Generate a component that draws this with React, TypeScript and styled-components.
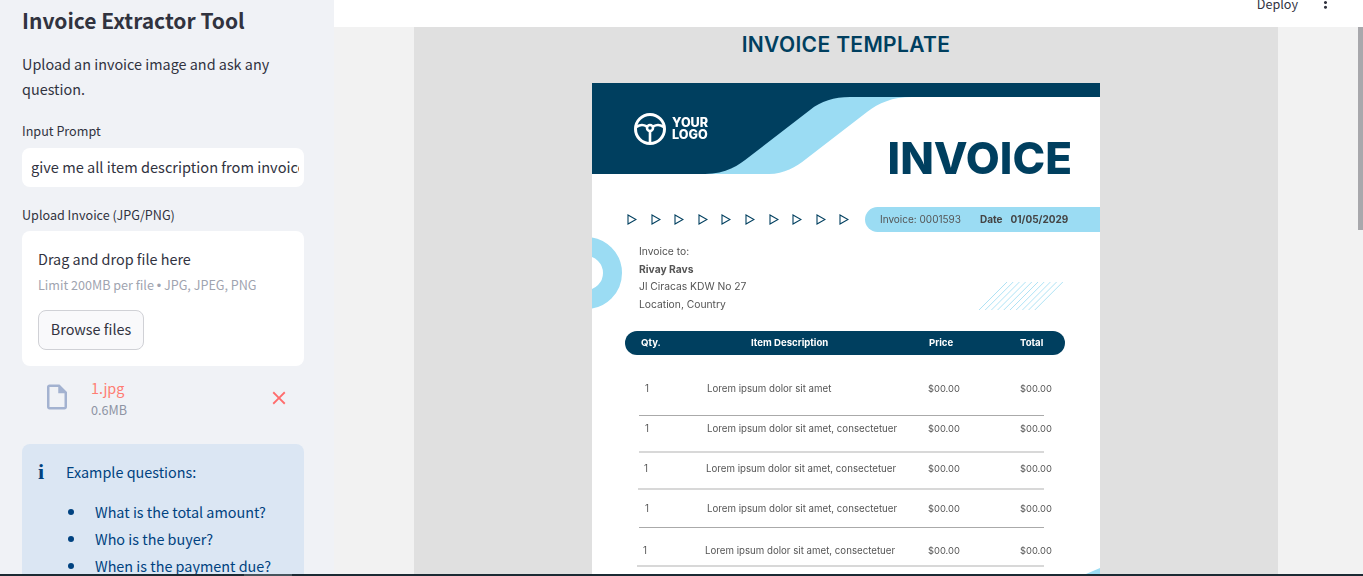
import React from "react"
import styled, { createGlobalStyle } from "styled-components"
import { MdClose, MdMoreVert, MdOutlineInsertDriveFile } from "react-icons/md"

const GlobalStyle = createGlobalStyle`
  html, body {
    margin: 0;
    height: 100%;
    overflow: hidden;
  }
  #root {
    height: 100%;
  }
  * {
    box-sizing: border-box;
  }
`

const NAVY = "#003f5f"
const SKY = "#9bdcf3"

const Shell = styled.div`
  height: 100%;
  display: flex;
  flex-direction: column;
  font-family: "Noto Sans CJK SC", "Noto Sans", sans-serif;
  color: #31333f;
`

const Workspace = styled.div`
  flex: 1;
  min-height: 0;
  display: flex;
`

const Taskbar = styled.div`
  height: 2px;
  flex: none;
  background-color: #1b2a33;
  padding-left: 244px;
  & span {
    display: block;
    width: 48px;
    height: 2px;
    background-color: #46545c;
  }
`

const Sidebar = styled.aside`
  width: 334px;
  flex: none;
  overflow: hidden;
  padding: 5px 30px 0 22px;
  background-color: #f0f2f6;
`

const AppTitle = styled.h1`
  margin: 0;
  font-size: 21px;
  line-height: 30px;
  font-weight: 600;
`

const Intro = styled.p`
  margin: 16px 0 0;
  font-size: 14.4px;
  line-height: 25px;
`

const FieldLabel = styled.div<{ $top: number }>`
  margin-top: ${p => p.$top}px;
  font-size: 12.6px;
  line-height: 20px;
`

const PromptInput = styled.input`
  display: block;
  width: 100%;
  height: 39px;
  margin-top: 7px;
  padding: 0 5px 2px 9px;
  border: 0;
  border-radius: 8px;
  outline: 0;
  background-color: #fff;
  color: #31333f;
  font-family: inherit;
  font-size: 14.6px;
`

const DropCard = styled.div`
  margin-top: 6px;
  padding: 16px 16px 16px;
  border-radius: 8px;
  background-color: #fff;
`

const DropTitle = styled.div`
  font-size: 14.4px;
  line-height: 24px;
`

const DropHint = styled.div`
  height: 20px;
  margin-top: 4px;
  font-size: 12.6px;
  line-height: 20px;
  white-space: nowrap;
  color: #a0a4b0;
`

const HintDot = styled.span`
  font-family: "Liberation Sans", sans-serif;
`

const BrowseButton = styled.button`
  display: block;
  width: 106px;
  height: 40px;
  margin-top: 15px;
  padding: 0 0 3px;
  border: 1px solid #d0d1d6;
  border-radius: 8px;
  background-color: #f9f9fb;
  color: #31333f;
  font-family: inherit;
  font-size: 14.4px;
`

const FileRow = styled.div`
  display: flex;
  margin-top: 10px;
  padding: 0 14px 0 20px;
`

const FileIcon = styled(MdOutlineInsertDriveFile)`
  flex: none;
  margin-top: 6px;
  color: #a3b2d0;
`

const FileInfo = styled.div`
  margin-left: 19px;
`

const FileName = styled.div`
  font-size: 14.4px;
  line-height: 24px;
  color: #ff7d73;
`

const FileSize = styled.div`
  font-size: 12.6px;
  line-height: 20px;
  color: #8e94a4;
`

const RemoveIcon = styled(MdClose)`
  flex: none;
  margin: 11px 0 0 auto;
  color: #ff6c6c;
`

const InfoBox = styled.div`
  margin-top: 24px;
  padding: 16px 16px 24px;
  border-radius: 8px;
  background-color: #dbe6f3;
  color: #004280;
`

const InfoHead = styled.div`
  display: flex;
  font-size: 14.4px;
  line-height: 24px;
`

const InfoGlyph = styled.span`
  width: 28px;
  flex: none;
  font-family: "Liberation Serif", serif;
  font-size: 22px;
  font-weight: 700;
`

const QuestionList = styled.ul`
  margin: 16px 0 0;
  padding: 0 0 0 30px;
  list-style: none;
  display: flex;
  flex-direction: column;
  gap: 3px;
`

const Question = styled.li`
  display: flex;
  align-items: center;
  font-size: 14.4px;
  line-height: 24px;
  white-space: nowrap;
  &::before {
    content: "";
    width: 6px;
    height: 6px;
    margin-right: 21px;
    border-radius: 50%;
    background-color: #004280;
  }
`

const Main = styled.main`
  flex: 1;
  min-width: 0;
  display: flex;
  flex-direction: column;
`

const TopBar = styled.header`
  height: 27px;
  flex: none;
  overflow: hidden;
  display: flex;
  justify-content: flex-end;
  align-items: flex-start;
  gap: 18px;
  padding-right: 28px;
  background-color: #fff;
`

const DeployLabel = styled.span`
  margin-top: -6px;
  font-size: 12.6px;
  line-height: 20px;
`

const MoreIcon = styled(MdMoreVert)`
  margin-top: -7px;
`

const ContentArea = styled.div`
  flex: 1;
  min-height: 0;
  display: flex;
  background-color: #f2f2f2;
`

const ImageColumn = styled.div`
  flex: 1;
  min-width: 0;
  display: flex;
  justify-content: center;
`

const ScrollTrack = styled.div`
  width: 5px;
  flex: none;
  & span {
    display: block;
    height: 203px;
    background-color: #a8a8ac;
  }
`

const TemplatePanel = styled.div`
  width: 864px;
  overflow: hidden;
  padding-top: 4px;
  background-color: #e0e0e0;
`

const TemplateTitle = styled.div`
  margin-bottom: 24px;
  text-align: center;
  font-family: Inter, "Liberation Sans", sans-serif;
  font-size: 21px;
  line-height: 28px;
  font-weight: 600;
  letter-spacing: 0.35px;
  color: ${NAVY};
`

const Sheet = styled.div`
  position: relative;
  width: 508px;
  height: 600px;
  margin: 0 auto;
  overflow: hidden;
  background-color: #fff;
  font-family: Inter, "Liberation Sans", sans-serif;
  color: #555;
  filter: blur(0.25px);
`

const Banner = styled.div`
  position: relative;
  height: 91px;
  display: flex;
  justify-content: space-between;
  align-items: flex-start;
  padding: 0 28px 0 42px;
`

const BannerArt = styled.svg`
  position: absolute;
  top: 0;
  left: 0;
`

const LogoBlock = styled.div`
  position: relative;
  display: flex;
  align-items: center;
  gap: 6px;
  margin-top: 30px;
  color: #fff;
`

const LogoText = styled.div`
  font-size: 12.6px;
  line-height: 12px;
  font-weight: 800;
`

const InvoiceHeading = styled.div`
  position: relative;
  margin-top: 55px;
  font-size: 44px;
  line-height: 40px;
  font-weight: 800;
  color: ${NAVY};
`

const RibbonRow = styled.div`
  display: flex;
  justify-content: space-between;
  align-items: center;
  height: 25px;
  margin-top: 33px;
  padding-left: 35px;
`

const Arrows = styled.div`
  display: flex;
  gap: 13.6px;
`

const MetaPill = styled.div`
  width: 235px;
  height: 25px;
  display: flex;
  align-items: center;
  padding: 0 0 2px 15px;
  border-radius: 12.5px 0 0 12.5px;
  background-color: ${SKY};
  font-size: 10px;
  white-space: nowrap;
`

const MetaStrong = styled.b<{ $left: number }>`
  margin-left: ${p => p.$left}px;
  font-weight: 700;
  color: #444;
`

const AddressRow = styled.div`
  display: flex;
  justify-content: space-between;
  padding: 11px 37px 0 47px;
`

const AddressBlock = styled.div`
  font-size: 10.3px;
  line-height: 17.6px;
`

const AddressName = styled.div`
  font-weight: 700;
`

const Stripes = styled.svg`
  align-self: flex-end;
  margin-bottom: 3px;
  opacity: 0.8;
`

const Donut = styled.div`
  position: absolute;
  top: 154px;
  left: -42px;
  width: 72px;
  height: 72px;
  border: 19px solid ${SKY};
  border-radius: 50%;
`

const TableHead = styled.div`
  display: grid;
  grid-template-columns: 110px 178px 91px 1fr;
  align-items: center;
  height: 24px;
  margin: 17.4px 35px 0 33px;
  padding: 0 0 0 16px;
  border-radius: 12px;
  background-color: ${NAVY};
  color: #fff;
  font-size: 9.6px;
  font-weight: 700;
`

const ItemRow = styled.div<{ $top: number; $bottom: number; $soft: boolean; $shift: number }>`
  display: grid;
  grid-template-columns: 62px ${p => 221 - p.$shift}px 92px 1fr;
  width: ${p => 405 - p.$shift}px;
  margin-left: ${p => 47 + p.$shift}px;
  padding: ${p => p.$top}px 0 ${p => p.$bottom}px 6px;
  border-bottom: ${p => (p.$soft ? "2px solid #d8d8d8" : "1px solid #aaa")};
  font-size: 9.7px;
  line-height: 12px;
  white-space: nowrap;
`

const Amount = styled.span`
  font-size: 9.4px;
`

const CornerMark = styled.svg`
  position: absolute;
  top: 485px;
  right: 0;
`

const ARROWS = Array.from({ length: 10 }, (_, i) => i)
const STRIPES = Array.from({ length: 10 }, (_, i) => i)

const ITEMS = [
  { top: 28, bottom: 20, soft: false, shift: 0, text: "Lorem ipsum dolor sit amet" },
  { top: 7, bottom: 16, soft: true, shift: 0, text: "Lorem ipsum dolor sit amet, consectetuer" },
  { top: 10, bottom: 13, soft: true, shift: -1, text: "Lorem ipsum dolor sit amet, consectetuer" },
  { top: 13, bottom: 12, soft: false, shift: 0, text: "Lorem ipsum dolor sit amet, consectetuer" },
  { top: 17, bottom: 8, soft: true, shift: -2, text: "Lorem ipsum dolor sit amet, consectetuer" },
]

const QUESTIONS = ["What is the total amount?", "Who is the buyer?", "When is the payment due?"]

const App: React.FC = () => {
  return (
    <Shell>
      <GlobalStyle />
      <Workspace>
        <Sidebar>
          <AppTitle>Invoice Extractor Tool</AppTitle>
          <Intro>Upload an invoice image and ask any question.</Intro>
          <FieldLabel $top={20}>Input Prompt</FieldLabel>
          <PromptInput readOnly value="give me all item description from invoice" />
          <FieldLabel $top={18}>Upload Invoice (JPG/PNG)</FieldLabel>
          <DropCard>
            <DropTitle>Drag and drop file here</DropTitle>
            <DropHint>
              Limit 200MB per file <HintDot>•</HintDot> JPG, JPEG, PNG
            </DropHint>
            <BrowseButton>Browse files</BrowseButton>
          </DropCard>
          <FileRow>
            <FileIcon size={30} />
            <FileInfo>
              <FileName>1.jpg</FileName>
              <FileSize>0.6MB</FileSize>
            </FileInfo>
            <RemoveIcon size={22} />
          </FileRow>
          <InfoBox>
            <InfoHead>
              <InfoGlyph>i</InfoGlyph>
              Example questions:
            </InfoHead>
            <QuestionList>
              {QUESTIONS.map(q => (
                <Question key={q}>{q}</Question>
              ))}
            </QuestionList>
          </InfoBox>
        </Sidebar>
        <Main>
          <TopBar>
            <DeployLabel>Deploy</DeployLabel>
            <MoreIcon size={19} />
          </TopBar>
          <ContentArea>
            <ImageColumn>
              <TemplatePanel>
                <TemplateTitle>INVOICE TEMPLATE</TemplateTitle>
                <Sheet>
                  <Banner>
                    <BannerArt width="508" height="91" viewBox="0 0 508 91">
                      <path
                        d="M100 91 H177 C192 91 204 84 214 76 L275 29 C287 20 300 14 320 14 H200 L100 60 Z"
                        fill={SKY}
                      />
                      <path
                        d="M0 0 H508 V14 H258 C242 14 229 18 218 27 L157 74 C147 82 134 91 113 91 H0 Z"
                        fill={NAVY}
                      />
                    </BannerArt>
                    <LogoBlock>
                      <svg width="32" height="32" viewBox="0 0 32 32" fill="none" stroke="#fff" strokeWidth="3">
                        <circle cx="16" cy="16" r="14.5" />
                        <circle cx="16" cy="15" r="3" strokeWidth="2.5" />
                        <path d="M2 14 C7 11.5 9 11.5 13 13.5 M19 13.5 C23 11.5 25 11.5 30 14 M16 18 V30" strokeWidth="2.6" />
                      </svg>
                      <LogoText>
                        YOUR
                        <br />
                        LOGO
                      </LogoText>
                    </LogoBlock>
                    <InvoiceHeading>INVOICE</InvoiceHeading>
                  </Banner>
                  <RibbonRow>
                    <Arrows>
                      {ARROWS.map(i => (
                        <svg key={i} width="10" height="11" viewBox="0 0 10 11" fill="none">
                          <path d="M1 1 L9 5.5 L1 10 Z" stroke={NAVY} strokeWidth="1.1" />
                        </svg>
                      ))}
                    </Arrows>
                    <MetaPill>
                      Invoice: 0001593
                      <MetaStrong $left={19}>Date</MetaStrong>
                      <MetaStrong $left={8}>01/05/2029</MetaStrong>
                    </MetaPill>
                  </RibbonRow>
                  <Donut />
                  <AddressRow>
                    <AddressBlock>
                      Invoice to:
                      <AddressName>Rivay Ravs</AddressName>
                      Jl Ciracas KDW No 27
                      <br />
                      Location, Country
                    </AddressBlock>
                    <Stripes width="84" height="28" viewBox="0 0 84 28" stroke={SKY} strokeWidth="1">
                      {STRIPES.map(i => (
                        <line key={i} x1={i * 6.2} y1="28" x2={i * 6.2 + 28} y2="0" />
                      ))}
                    </Stripes>
                  </AddressRow>
                  <TableHead>
                    <span>Qty.</span>
                    <span>Item Description</span>
                    <span>Price</span>
                    <span>Total</span>
                  </TableHead>
                  {ITEMS.map((item, i) => (
                    <ItemRow key={i} $top={item.top} $bottom={item.bottom} $soft={item.soft} $shift={item.shift}>
                      <span>1</span>
                      <span>{item.text}</span>
                      <Amount>$00.00</Amount>
                      <Amount>$00.00</Amount>
                    </ItemRow>
                  ))}
                  <CornerMark width="14" height="6" viewBox="0 0 14 6">
                    <path d="M0 6 L14 0 V6 Z" fill={SKY} />
                  </CornerMark>
                </Sheet>
              </TemplatePanel>
            </ImageColumn>
            <ScrollTrack>
              <span />
            </ScrollTrack>
          </ContentArea>
        </Main>
      </Workspace>
      <Taskbar>
        <span />
      </Taskbar>
    </Shell>
  )
}

export default App
